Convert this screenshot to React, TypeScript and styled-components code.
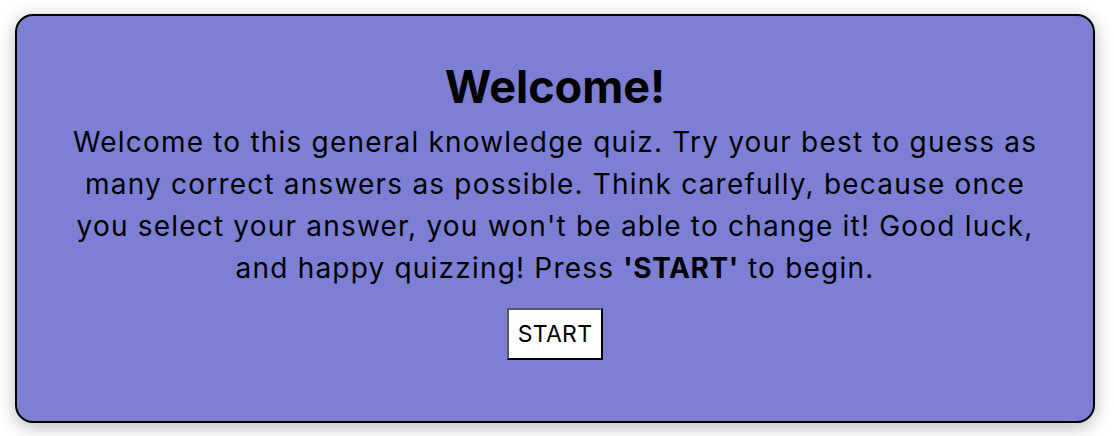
import React from "react";
import styled, { createGlobalStyle } from "styled-components";

const GlobalStyle = createGlobalStyle`
  html, body {
    margin: 0;
    padding: 0;
    background: #ffffff;
  }
  body {
    font-family: Inter, "Noto Sans", sans-serif;
    color: #000000;
  }
`;

const Page = styled.main`
  padding: 14px 19px 13px 15px;
`;

const Card = styled.section`
  box-sizing: border-box;
  width: 1080px;
  height: 409px;
  border: 2px solid #000000;
  border-radius: 18px;
  background: #7d7fd4;
  box-shadow: 0 4px 18px rgba(0, 0, 0, 0.28);
  display: flex;
  flex-direction: column;
  align-items: center;
  padding-top: 44px;
  text-align: center;
`;

const Title = styled.h1`
  margin: 0;
  font-size: 45px;
  line-height: 54px;
  font-weight: 700;
`;

const Intro = styled.p`
  margin: 7px 0 0;
  max-width: 990px;
  font-size: 28px;
  line-height: 42px;
  font-weight: 400;
  letter-spacing: 1.2px;

  strong {
    font-weight: 700;
    letter-spacing: 0.6px;
  }
`;

const StartButton = styled.button`
  margin-top: 19px;
  height: 52px;
  padding: 0 9px;
  background: #ffffff;
  border-width: 2px;
  border-style: solid;
  border-color: #5a5a5a #000000 #000000 #5a5a5a;
  font-family: Inter, "Noto Sans", sans-serif;
  font-size: 23px;
  letter-spacing: 0.3px;
  color: #000000;
  cursor: pointer;
`;

export default function App() {
  return (
    <>
      <GlobalStyle />
      <Page>
        <Card>
          <Title>Welcome!</Title>
          <Intro>
            Welcome to this general knowledge quiz. Try your best to guess as
            many correct answers as possible. Think carefully, because once you
            select your answer, you won't be able to change it! Good luck, and
            happy quizzing! Press <strong>'START'</strong> to begin.
          </Intro>
          <StartButton type="button">START</StartButton>
        </Card>
      </Page>
    </>
  );
}
